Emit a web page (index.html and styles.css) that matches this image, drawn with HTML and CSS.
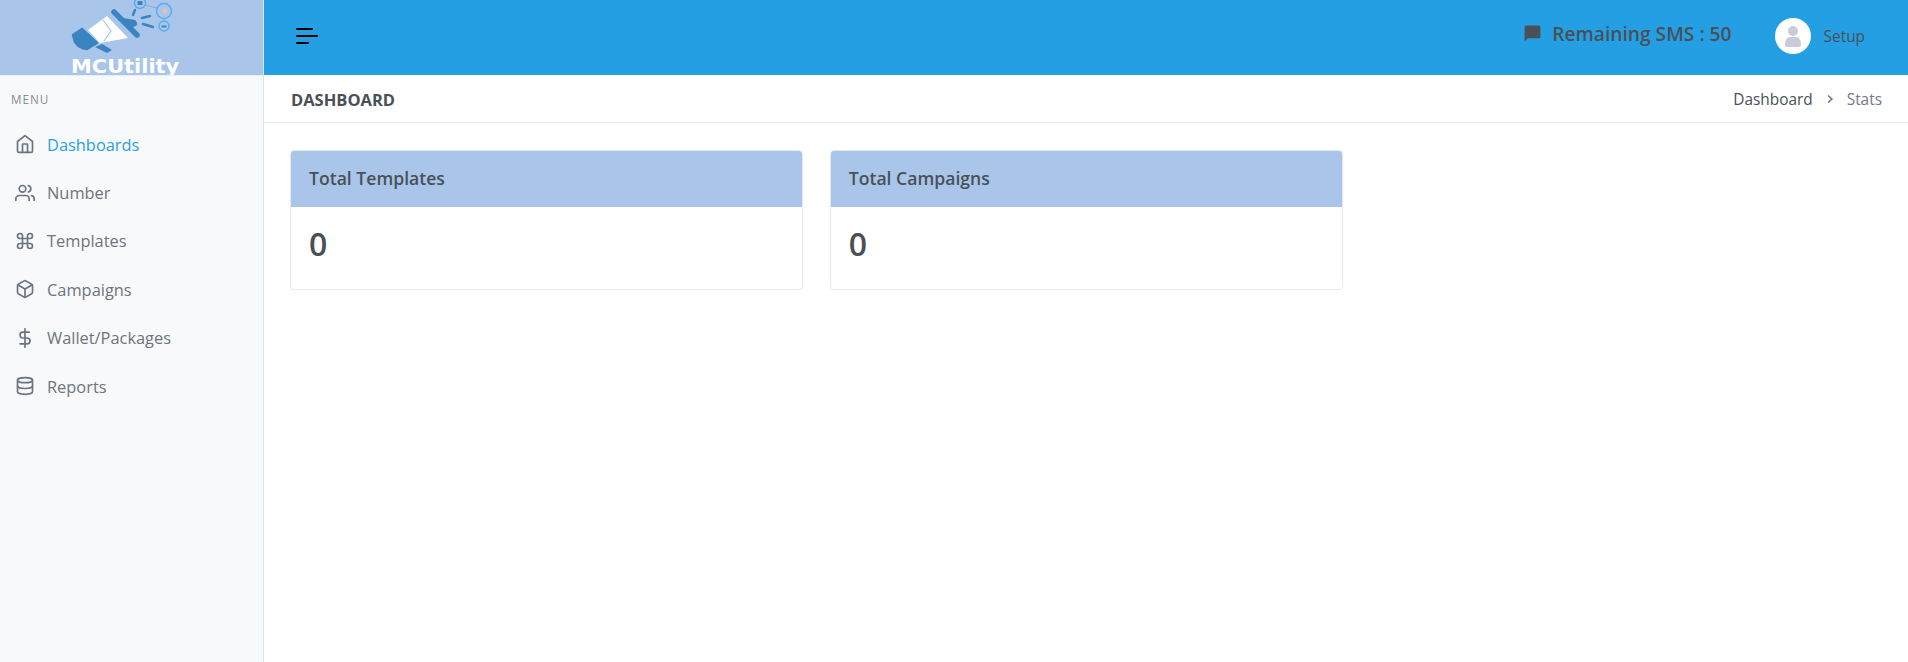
FILE: index.html
```html
<!DOCTYPE html>
<html lang="en">
<head>
<meta charset="utf-8">
<title>MCUtility Dashboard</title>
<link rel="stylesheet" href="styles.css">
</head>
<body>
<div class="app">
  <aside class="sidebar">
    <div class="brand">
      <svg class="brand-art" viewBox="0 0 150 62" width="150" height="62" aria-hidden="true">
        <path d="M23 35 L32 29 L47 43 L37 49 Q29 48 25 42 Z" fill="#3a84c2" stroke="#3a84c2" stroke-width="2.500" stroke-linejoin="round"/>
        <path d="M38 30 L57 16 L78 38 L50 43 Z" fill="#fff"/>
        <path d="M53 20 L61 31 L54 41" fill="none" stroke="#a9c6ea" stroke-width="1.200"/>
        <path d="M64 12 L87 35" stroke="#3a84c2" stroke-width="5.500" stroke-linecap="round"/>
        <path d="M73 18 L85 20 Q88 23 87 25 L82 28 Z" fill="#3a84c2"/>
        <path d="M45 47 L52 44 L62 50 L57 53 Z" fill="#3a84c2"/>
        <path d="M85 10 L83 15 M92 18 L100 16 M93 24 L103 27" stroke="#3a84c2" stroke-width="2.500" stroke-linecap="round"/>
        <path d="M95 5 L107 8 M114 18 L114 22" stroke="#9aa6b4" stroke-width="1" fill="none"/>
        <circle cx="90" cy="3" r="5.500" fill="#a9c6ea" stroke="#58aef0" stroke-width="1.500"/>
        <rect x="87.500" y="1" width="5" height="4" fill="#3a84c2"/>
        <circle cx="114" cy="11" r="7.500" fill="#a9c6ea" stroke="#58aef0" stroke-width="1.500"/>
        <circle cx="115" cy="11" r="2.500" fill="#e4bfb5"/>
        <circle cx="114" cy="26" r="5" fill="#a9c6ea" stroke="#58aef0" stroke-width="1.500"/>
        <rect x="111.500" y="25.500" width="5" height="2" fill="#3a84c2"/>
      </svg>
      <span class="brand-name">MCUtility</span>
    </div>
    <div class="menu-title">MENU</div>
    <nav class="menu">
      <a class="menu-item active"><svg class="ico" viewBox="0 0 24 24"><path d="M3 9l9-7 9 7v11a2 2 0 0 1-2 2H5a2 2 0 0 1-2-2z"/><path d="M9 22V12h6v10"/></svg><span>Dashboards</span></a>
      <a class="menu-item"><svg class="ico" viewBox="0 0 24 24"><path d="M17 21v-2a4 4 0 0 0-4-4H5a4 4 0 0 0-4 4v2"/><circle cx="9" cy="7" r="4"/><path d="M23 21v-2a4 4 0 0 0-3-3.870"/><path d="M16 3.130a4 4 0 0 1 0 7.750"/></svg><span>Number</span></a>
      <a class="menu-item"><svg class="ico" viewBox="0 0 24 24"><path d="M18 3a3 3 0 0 0-3 3v12a3 3 0 0 0 3 3 3 3 0 0 0 3-3 3 3 0 0 0-3-3H6a3 3 0 0 0-3 3 3 3 0 0 0 3 3 3 3 0 0 0 3-3V6a3 3 0 0 0-3-3 3 3 0 0 0-3 3 3 3 0 0 0 3 3h12a3 3 0 0 0 3-3 3 3 0 0 0-3-3z"/></svg><span>Templates</span></a>
      <a class="menu-item"><svg class="ico" viewBox="0 0 24 24"><path d="M21 16V8a2 2 0 0 0-1-1.730l-7-4a2 2 0 0 0-2 0l-7 4A2 2 0 0 0 3 8v8a2 2 0 0 0 1 1.730l7 4a2 2 0 0 0 2 0l7-4A2 2 0 0 0 21 16z"/><path d="M3.270 6.960L12 12.010l8.730-5.050"/><path d="M12 22.080V12"/></svg><span>Campaigns</span></a>
      <a class="menu-item"><svg class="ico" viewBox="0 0 24 24"><path d="M12 1v22"/><path d="M17 5H9.500a3.500 3.500 0 0 0 0 7h5a3.500 3.500 0 0 1 0 7H6"/></svg><span>Wallet/Packages</span></a>
      <a class="menu-item"><svg class="ico" viewBox="0 0 24 24"><ellipse cx="12" cy="5" rx="9" ry="3"/><path d="M21 12c0 1.660-4 3-9 3s-9-1.340-9-3"/><path d="M3 5v14c0 1.660 4 3 9 3s9-1.340 9-3V5"/></svg><span>Reports</span></a>
    </nav>
  </aside>
  <main class="main">
    <header class="topbar">
      <button class="burger" aria-label="Toggle menu"><i class="bar b1"></i><i class="bar b2"></i><i class="bar b3"></i></button>
      <div class="top-right">
        <div class="sms">
          <svg class="sms-ico" viewBox="0 0 24 24"><path d="M20 2H4a2 2 0 0 0-2 2v18l4-4h14a2 2 0 0 0 2-2V4a2 2 0 0 0-2-2z"/></svg>
          <span>Remaining SMS : 50</span>
        </div>
        <div class="user">
          <span class="avatar"><svg viewBox="0 0 36 36" width="36" height="36"><circle cx="18" cy="13" r="5"/><path d="M10 27c0-5 2-8 5-8h6c3 0 5 3 5 8 0 1-1 2-3 2H13c-2 0-3-1-3-2z"/></svg></span>
          <span class="user-name">Setup</span>
        </div>
      </div>
    </header>
    <div class="pagebar">
      <h1 class="page-title">DASHBOARD</h1>
      <div class="crumbs"><span class="crumb">Dashboard</span><svg class="crumb-sep" viewBox="0 0 10 10"><path d="M3 1.500 L7 5 L3 8.500"/></svg><span class="crumb muted">Stats</span></div>
    </div>
    <section class="cards">
      <article class="card"><div class="card-head">Total Templates</div><div class="card-body">0</div></article>
      <article class="card"><div class="card-head">Total Campaigns</div><div class="card-body">0</div></article>
    </section>
  </main>
</div>
</body>
</html>
```
FILE: styles.css
```css
* { box-sizing: border-box; }
html, body { margin: 0; height: 100%; }
body { font-family: "Open Sans", sans-serif; color: #495057; background: #fff; overflow: hidden; }
.app { display: flex; height: 662px; }
.sidebar { width: 264px; flex: none; background: #f8f9fa; border-right: 1px solid #dfe3e8; }
.brand { height: 76px; background: #a9c6ea; position: relative; overflow: hidden; border-bottom: 1px solid #e8eef6; }
.brand-art { position: absolute; left: 50px; top: 0; }
.brand-name { position: absolute; left: 71px; top: 58px; font: 700 19px/17px "DejaVu Sans", sans-serif; color: #fff; transform: scaleX(1.1); transform-origin: left; }
.menu-title { padding: 15px 0 0 11px; font-size: 11.7px; line-height: 16px; font-weight: 400; letter-spacing: 1px; color: #868e96; }
.menu { display: flex; flex-direction: column; padding-top: 13px; }
.menu-item { display: flex; align-items: center; height: 48.4px; padding-left: 15px; font-size: 16.4px; color: #6c757d; }
.menu-item.active { color: #2a9fe6; }
.ico { width: 20px; height: 20px; flex: none; margin-right: 12px; fill: none; stroke: #6b7280; stroke-width: 2; stroke-linecap: round; stroke-linejoin: round; }
.main { flex: 1; min-width: 0; }
.topbar { height: 75px; background: #259fe4; display: flex; align-items: center; justify-content: space-between; padding: 0 43px 0 32px; }
.burger { display: flex; flex-direction: column; gap: 5px; width: 24px; padding: 0; background: none; border: 0; margin-top: -3px; }
.bar { display: block; height: 2px; background: #000; border-radius: 1px; }
.b1 { width: 17px; }
.b2 { width: 22px; }
.b3 { width: 13px; }
.top-right { display: flex; align-items: center; }
.sms { display: flex; align-items: center; gap: 10px; font-size: 19.2px; font-weight: 600; color: #495057; margin-top: -8px; margin-right: 43px; }
.sms-ico { width: 19px; height: 19px; fill: #495057; }
.user { display: flex; align-items: center; gap: 13px; font-size: 15.4px; color: #495057; margin-top: -3px; }
.avatar { width: 36px; height: 36px; border-radius: 50%; background: #fff; display: block; }
.avatar svg { display: block; fill: #c9cbd8; }
.pagebar { height: 47px; margin-top: 1px; border-bottom: 1px solid #e9ebee; display: flex; align-items: center; justify-content: space-between; padding: 1px 26px 0 27px; }
.page-title { margin: 0; font-size: 16.5px; font-weight: 700; color: #495057; }
.crumbs { display: flex; align-items: center; font-size: 15.4px; }
.crumb-sep { width: 10px; height: 10px; margin: -2px 12px 0; fill: none; stroke: #6c757d; stroke-width: 1.5; }
.muted { color: #74788d; }
.cards { display: flex; gap: 26.4px; padding: 27px 26px; }
.card { width: 513.4px; height: 140px; border: 1px solid #e6e8eb; border-radius: 4px; overflow: hidden; }
.card-head { height: 56px; background: #a9c6ea; padding: 0 18px 2px; display: flex; align-items: center; font-size: 17.6px; font-weight: 600; color: #495057; }
.card-body { padding: 16px 18px; font-size: 32px; line-height: 42px; font-weight: 600; color: #495057; }
```
